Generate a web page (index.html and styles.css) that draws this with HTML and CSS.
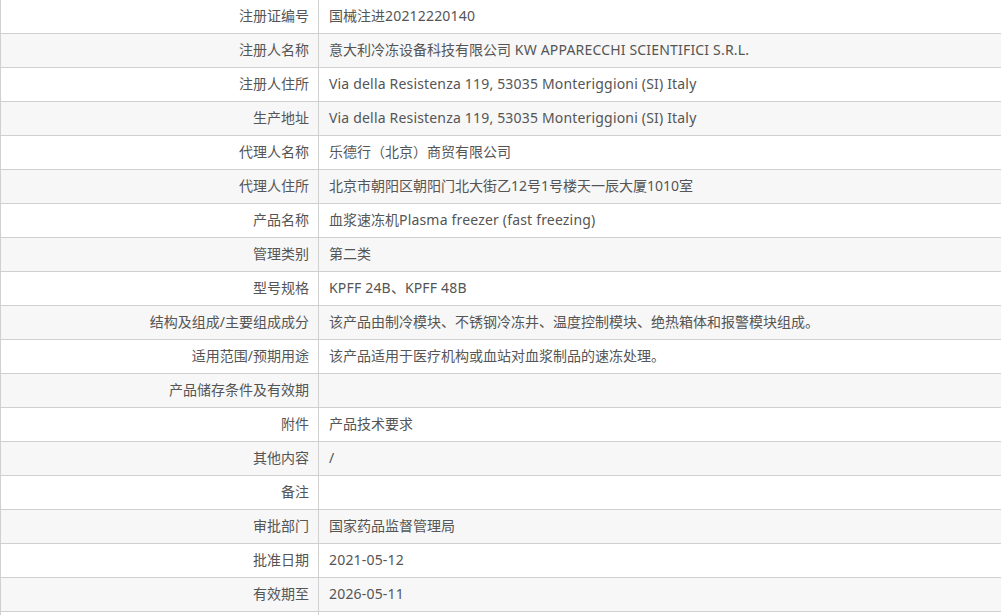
FILE: index.html
```html
<!DOCTYPE html>
<html lang="zh-CN">
<head>
<meta charset="utf-8">
<title>注册证信息</title>
<link rel="stylesheet" href="styles.css">
</head>
<body>
<div class="info-table">
  <div class="row"><div class="label">注册证编号</div><div class="value">国械注进<span class="en">20212220140</span></div></div>
  <div class="row alt"><div class="label">注册人名称</div><div class="value">意大利冷冻设备科技有限公司<span class="en">&nbsp;KW APPARECCHI SCIENTIFICI S.R.L.</span></div></div>
  <div class="row"><div class="label">注册人住所</div><div class="value"><span class="en">Via della Resistenza 119, 53035 Monteriggioni (SI) Italy</span></div></div>
  <div class="row alt"><div class="label">生产地址</div><div class="value"><span class="en">Via della Resistenza 119, 53035 Monteriggioni (SI) Italy</span></div></div>
  <div class="row"><div class="label">代理人名称</div><div class="value">乐德行（北京）商贸有限公司</div></div>
  <div class="row alt"><div class="label">代理人住所</div><div class="value">北京市朝阳区朝阳门北大街乙12号1号楼天一辰大厦1010室</div></div>
  <div class="row"><div class="label">产品名称</div><div class="value">血浆速冻机<span class="en">Plasma freezer (fast freezing)</span></div></div>
  <div class="row alt"><div class="label">管理类别</div><div class="value">第二类</div></div>
  <div class="row"><div class="label">型号规格</div><div class="value"><span class="en">KPFF 24B</span>、<span class="en">KPFF 48B</span></div></div>
  <div class="row alt"><div class="label">结构及组成/主要组成成分</div><div class="value">该产品由制冷模块、不锈钢冷冻井、温度控制模块、绝热箱体和报警模块组成。</div></div>
  <div class="row"><div class="label">适用范围/预期用途</div><div class="value">该产品适用于医疗机构或血站对血浆制品的速冻处理。</div></div>
  <div class="row alt"><div class="label">产品储存条件及有效期</div><div class="value"></div></div>
  <div class="row"><div class="label">附件</div><div class="value">产品技术要求</div></div>
  <div class="row alt"><div class="label">其他内容</div><div class="value">/</div></div>
  <div class="row"><div class="label">备注</div><div class="value"></div></div>
  <div class="row alt"><div class="label">审批部门</div><div class="value">国家药品监督管理局</div></div>
  <div class="row"><div class="label">批准日期</div><div class="value"><span class="en">2021-05-12</span></div></div>
  <div class="row alt"><div class="label">有效期至</div><div class="value"><span class="en">2026-05-11</span></div></div>
  <div class="row"><div class="label"></div><div class="value"></div></div>
</div>
</body>
</html>
```
FILE: styles.css
```css
html, body {
  margin: 0;
  padding: 0;
  background: #fff;
}
body {
  font-family: "Noto Sans", "Noto Sans CJK SC", sans-serif;
  font-size: 14px;
  color: #555;
}
.info-table {
  border-left: 1px solid #d0d0d0;
}
.row {
  display: grid;
  grid-template-columns: 318px 1fr;
  height: 34px;
  box-sizing: border-box;
  border-bottom: 1px solid #d0d0d0;
  background: #fff;
}
.row.alt {
  background: #f7f7f7;
}
.label, .value {
  display: flex;
  align-items: center;
  white-space: nowrap;
  line-height: 1;
  padding-bottom: 1px;
  box-sizing: border-box;
}
.label {
  justify-content: flex-end;
  padding-right: 9px;
  border-right: 1px solid #d0d0d0;
}
.value {
  padding-left: 10px;
}
.en {
  letter-spacing: 0.18px;
}
```
